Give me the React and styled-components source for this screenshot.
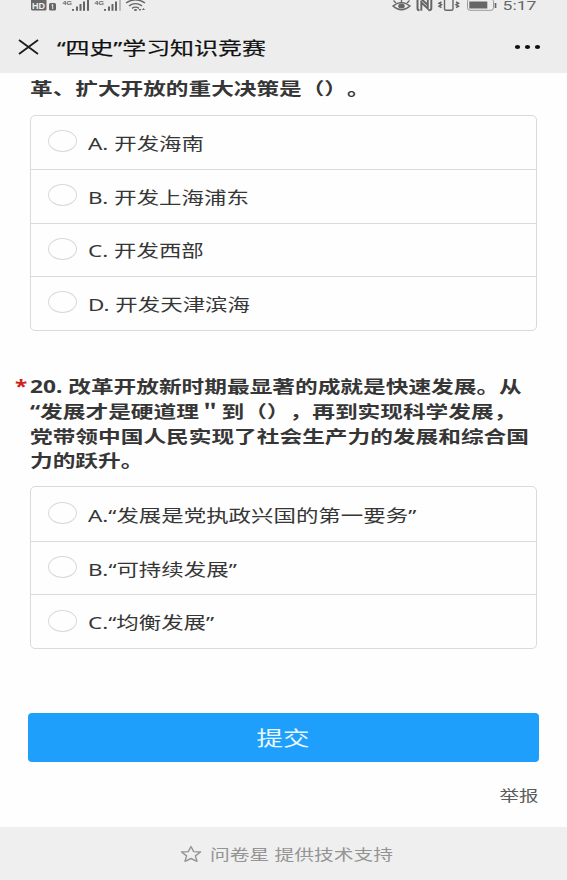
import React from "react";
import styled, { createGlobalStyle } from "styled-components";

const Global = createGlobalStyle`
  *, *::before, *::after { box-sizing: border-box; }
  body { margin: 0; background: #fefefe; }
`;

const Page = styled.div`
  width: 567px;
  height: 880px;
  overflow: hidden;
  display: flex;
  flex-direction: column;
  background: #fefefe;
  color: #363636;
  font-family: "Noto Sans", "Noto Sans CJK SC", sans-serif;
  text-spacing-trim: space-all;
`;

const Header = styled.header`
  height: 73px;
  flex: none;
  display: flex;
  flex-direction: column;
  background: #ededed;
`;

const StatusBar = styled.div`
  height: 14px;
  display: flex;
  justify-content: space-between;
  padding: 0 30px 0 30px;
`;

const NavBar = styled.div`
  height: 59px;
  display: flex;
  align-items: center;
  padding: 7px 26px 0 18px;
`;

const Wide = styled.span`
  display: block;
  flex: none;
  white-space: pre;
  transform: scaleX(${(p) => p.$x || 1.324});
  transform-origin: ${(p) => p.$origin || "left"} center;
`;

const Title = styled(Wide)`
  flex: 1;
  margin-left: 17px;
  padding-top: 1px;
  font-size: 18px;
  line-height: 26px;
  font-weight: 400;
  color: #111;
  -webkit-text-stroke: 0.2px #111;
`;

const Content = styled.main`
  flex: 1;
  display: flex;
  flex-direction: column;
  padding: 4px 28px 0 30px;
`;

const Question = styled.div`
  display: flex;
  flex-direction: column;
  position: relative;
  font-size: 17px;
  line-height: 24.6px;
  font-weight: 700;
  margin-top: ${(p) => p.$top || 0}px;
`;

const Required = styled(Wide)`
  position: absolute;
  left: -15px;
  top: 0;
  color: #d0211c;
`;

const Options = styled.div`
  display: flex;
  flex-direction: column;
  width: 507px;
  margin-top: ${(p) => p.$top}px;
  border: 1px solid #dadada;
  border-radius: 5px;
`;

const Option = styled.label`
  height: 53.5px;
  display: flex;
  align-items: center;
  padding: 3px 0 0 17px;
  font-size: 17px;
  line-height: 24px;
  & + & { border-top: 1px solid #dadada; }
`;

const Radio = styled.span`
  width: 29px;
  height: 22px;
  flex: none;
  margin: -5px 11px 0 0;
  border: 1px solid #d9d9d9;
  border-radius: 50%;
`;

const Submit = styled.button`
  width: 511px;
  height: 49px;
  flex: none;
  margin: 64px 0 0 -2px;
  padding: 1px 1px 0 0;
  display: flex;
  align-items: center;
  justify-content: center;
  border: 0;
  border-radius: 4px;
  background: #1e9ffb;
  color: #e9f8ff;
  font: 400 20px/28px "Noto Sans CJK SC", sans-serif;
`;

const Report = styled.div`
  display: flex;
  justify-content: flex-end;
  margin: 22px 1px 0 0;
  font-size: 14.7px;
  line-height: 22px;
  color: #5b5b5b;
`;

const Footer = styled.footer`
  height: 53px;
  flex: none;
  display: flex;
  align-items: center;
  padding: 1px 0 0 180px;
  gap: 8px;
  background: #efefef;
  color: #949494;
  font-size: 15px;
  line-height: 22px;
`;

const Icon = styled.svg`
  display: block;
  flex: none;
  overflow: visible;
`;

const StatusLeft = () => (
  <Icon width="125" height="14" viewBox="30 0 125 14" fill="#666">
    <path d="M31 0H46.500V9Q46.500 10.500 45 10.500H32.500Q31 10.500 31 9Z" />
    <text x="32" y="8.600" fontSize="8.500" fontWeight="700" textLength="13" lengthAdjust="spacingAndGlyphs" fill="#eee" fontFamily="Liberation Sans">HD</text>
    <rect x="49" y="3" width="7" height="7.500" rx="1.500" />
    <path d="M51.500 5.200L52.700 4.500V9" stroke="#eee" fill="none" />
    {[0, 32].map((x) => (
      <g key={x} transform={`translate(${x} 0)`}>
        <text x="62.500" y="4.800" fontSize="6" fontWeight="700" textLength="9.500" lengthAdjust="spacingAndGlyphs" fontFamily="Liberation Sans">4G</text>
        <rect x="72" y="9" width="2" height="1.800" />
        <rect x="76" y="6.500" width="2" height="4.300" />
        <rect x="79.500" y="4" width="2" height="6.800" />
        <rect x="83" y="1.500" width="2" height="9.300" />
        <rect x="87" y="0" width="2" height="10.800" fill={x ? "#bbb" : "#666"} />
      </g>
    ))}
    <g fill="none" stroke="#666" strokeWidth="1.400">
      <path d="M126 3Q135.500 -3.500 145 3M129 5.800Q135.500 1.500 142 5.800M132 8.300Q135.500 6 139 8.300" />
    </g>
    <ellipse cx="135.500" cy="10" rx="1.600" ry="1.100" />
    <path d="M138.500 9L140 11L141.500 9ZM142 10L143.500 8L145 10Z" />
  </Icon>
);

const StatusRight = () => (
  <Icon width="146" height="14" viewBox="391 0 146 14" fill="none" stroke="#666">
    <path d="M393 6Q401.500 -1 410 6Q401.500 13.500 393 6Z" strokeWidth="1.500" />
    <ellipse cx="401.500" cy="6" rx="3.300" ry="2.500" fill="#666" stroke="none" />
    <path d="M401.500 2V-1M396 3L393.500 0.500M407 3L409.500 0.500" strokeWidth="1.300" />
    <path d="M417.500 0V8.500Q417.500 10 419.500 10.300M431.300 0V8.500Q431.300 10.300 428.500 10.300" strokeWidth="2" />
    <path d="M421.300 10.800V2.500L427.800 8.500V0M421.300 0.500H423L427.800 5" strokeWidth="1.900" />
    <path d="M444.500 0V9Q444.500 10.300 446 10.300H451.500Q453 10.300 453 9V0" strokeWidth="1.400" />
    <path d="M441.500 2L439 3.200L441.500 4.700L439 6.200L441.500 7.700M456 2L458.500 3.200L456 4.700L458.500 6.200L456 7.700" strokeWidth="1.500" />
    <rect x="467.500" y="-1" width="26" height="11.300" rx="2.500" stroke="#999" />
    <rect x="469.300" y="1.500" width="18" height="7" fill="#666" stroke="none" />
    <path d="M495.500 3V8" strokeWidth="1.700" />
    <text x="502.500" y="10.200" fontSize="13.500" textLength="34" lengthAdjust="spacingAndGlyphs" fontFamily="Roboto" fill="#666" stroke="none">5:17</text>
  </Icon>
);

const groupOne = ["A. 开发海南", "B. 开发上海浦东", "C. 开发西部", "D. 开发天津滨海"];
const groupTwo = ["A.“发展是党执政兴国的第一要务”", "B.“可持续发展”", "C.“均衡发展”"];
const questionLines = [
  "20. 改革开放新时期最显著的成就是快速发展。从",
  "“发展才是硬道理＂到（），再到实现科学发展，",
  "党带领中国人民实现了社会生产力的发展和综合国",
  "力的跃升。",
];

const OptionList = ({ items, top }) => (
  <Options $top={top}>
    {items.map((text) => (
      <Option key={text}>
        <Radio />
        <Wide $x={1.32}>{text}</Wide>
      </Option>
    ))}
  </Options>
);

export default function App() {
  return (
    <Page lang="zh-CN">
      <Global />
      <Header>
        <StatusBar>
          <StatusLeft />
          <StatusRight />
        </StatusBar>
        <NavBar>
          <Icon width="22" height="18" viewBox="0 0 22 18" fill="none" stroke="#1c1c1c" strokeWidth="1.800">
            <path d="M1 2L20 16M20 2L1 16" />
          </Icon>
          <Title $x={1.332}>“四史”学习知识竞赛</Title>
          <Icon width="27" height="6" viewBox="0 0 27 6" fill="#111">
            <ellipse cx="3.500" cy="3" rx="2.600" ry="2.100" />
            <ellipse cx="13.500" cy="3" rx="2.600" ry="2.100" />
            <ellipse cx="23.500" cy="3" rx="2.600" ry="2.100" />
          </Icon>
        </NavBar>
      </Header>
      <Content>
        <Question>
          <Wide $x={1.332}>革、扩大开放的重大决策是（）。</Wide>
        </Question>
        <OptionList items={groupOne} top={13} />
        <Question $top={44.8}>
          <Required>*</Required>
          {questionLines.map((line) => (
            <Wide key={line} $x={1.334}>{line}</Wide>
          ))}
        </Question>
        <OptionList items={groupTwo} top={12.6} />
        <Submit type="button">
          <Wide $origin="center">提交</Wide>
        </Submit>
        <Report>
          <Wide $origin="right">举报</Wide>
        </Report>
      </Content>
      <Footer>
        <Icon width="22" height="18" viewBox="0 0 22 18" fill="none" stroke="#949494" strokeWidth="1.400" strokeLinejoin="round">
          <path d="M11 1.500L13.700 6.600L20.500 7L15.400 10.900L17 16.300L11 13.500L5 16.300L6.600 10.900L1.500 7L8.300 6.600Z" />
        </Icon>
        <Wide $x={1.318}>问卷星 提供技术支持</Wide>
      </Footer>
    </Page>
  );
}
